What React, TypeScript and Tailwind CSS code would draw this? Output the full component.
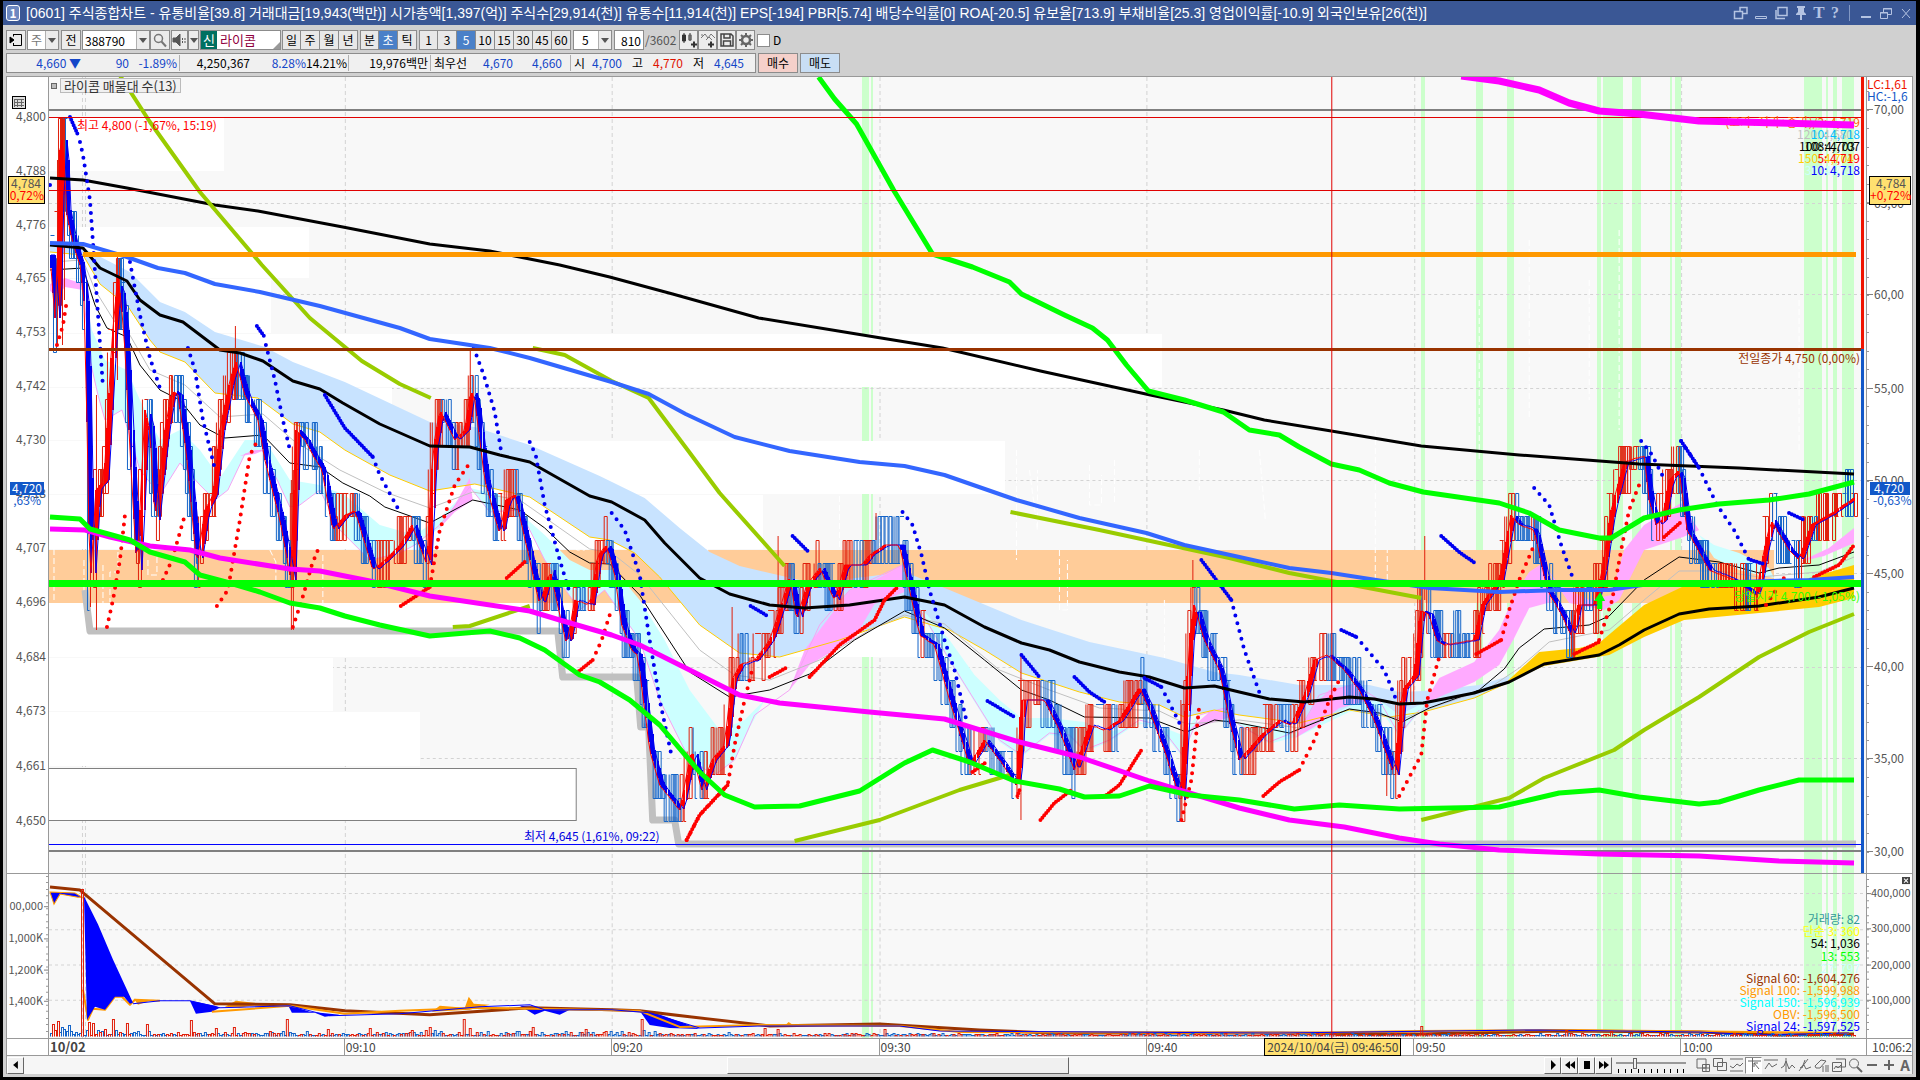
import React from "react";

type Pt = [number, number];

const parse = (s: string): Pt[] => s.trim().split(/\s+/).map((p) => p.split(",").map(Number) as Pt);

/* ---------- price path and generated bars ---------- */
const PRICE = parse(
  "50,255 56,330 60,150 63,135 66,210 72,240 80,265 85,310 90,590 96,490 104,480 112,340 118,275 124,330 130,450 137,570 145,410 150,430 155,520 165,430 172,390 178,395 186,450 197,565 205,510 213,495 220,430 230,380 236,362 245,395 258,420 265,460 280,520 291,580 296,430 305,440 313,455 322,470 333,530 345,515 355,510 373,570 385,560 400,545 412,525 427,565 433,450 440,410 455,440 465,430 471,390 475,400 485,480 500,535 506,500 515,495 530,560 540,605 550,570 567,645 575,600 590,605 598,555 607,545 615,575 622,625 632,650 638,655 650,750 660,785 680,810 692,750 702,790 712,760 725,745 732,680 740,665 755,660 770,640 783,600 790,575 797,620 807,585 820,568 835,600 845,565 862,565 870,555 885,545 900,545 910,590 920,635 935,645 950,700 970,765 985,740 1000,760 1017,785 1022,700 1035,700 1045,700 1060,730 1075,770 1090,725 1105,730 1120,720 1140,687 1150,710 1165,750 1181,800 1190,640 1195,605 1205,640 1220,670 1230,720 1240,760 1262,735 1280,720 1292,725 1305,695 1315,660 1328,655 1345,670 1360,690 1375,720 1395,775 1403,690 1415,675 1421,610 1430,615 1437,640 1445,645 1475,640 1482,605 1492,590 1500,580 1512,515 1520,525 1535,530 1548,590 1560,610 1572,635 1578,605 1595,605 1603,570 1612,510 1625,462 1645,456 1650,500 1657,525 1663,520 1670,480 1680,470 1688,530 1710,570 1735,580 1757,595 1765,550 1772,520 1790,550 1800,560 1812,525 1830,515 1840,508 1855,498"
);

const at = (x: number): number => {
  if (x <= PRICE[0][0]) return PRICE[0][1];
  for (let i = 1; i < PRICE.length; i++) {
    if (x <= PRICE[i][0]) {
      const [x0, y0] = PRICE[i - 1];
      const [x1, y1] = PRICE[i];
      return y0 + ((y1 - y0) * (x - x0)) / (x1 - x0);
    }
  }
  return PRICE[PRICE.length - 1][1];
};

const noise = (n: number): number => {
  const v = Math.sin(n * 127.1 + 11.7) * 43758.5453;
  return v - Math.floor(v);
};

const TICK = 23.45;
const buildBars = () => {
  let up = "";
  let down = "";
  let rise = "";
  let fall = "";
  let fast = "";
  let slow = "";
  for (let i = 0; i < 810; i++) {
    const x = Math.round(51 + i * 2.23);
    const a = at(x - 1);
    const b = at(x + 3);
    const slope = b - a;
    const g = Math.floor(i / 4);
    const top = 117.5 + Math.floor((Math.min(a, b) - 117.5 - noise(g) * 12) / TICK) * TICK;
    let bottom = 117.5 + Math.ceil((Math.max(a, b) - 117.5 + noise(g + 500) * 9) / TICK) * TICK;
    if (bottom - top < TICK) bottom = top + TICK;
    const y0 = Math.round(Math.max(117, top));
    const y1 = Math.round(Math.min(844, bottom));
    const isUp = noise(g + 900) + (slope < -3 ? 0.5 : slope > 3 ? -0.5 : 0) > 0.5;
    const r = noise(i + 77);
    let d = "";
    if (r < 0.55) d = `M${x}.5 ${y0}.5h3V${y1}.5h-3z`;
    else if (r < 0.8) d = `M${x}.5 ${y0}.5V${y1}.5h2`;
    else if (r < 0.9) d = `M${x - 1}.5 ${y0}.5h4`;
    if (isUp) up += d;
    else down += d;
    const p = at(x);
    const q = at(x - 5);
    const seg = `M${x} ${p.toFixed(0)}V${q.toFixed(0)}`;
    if (Math.abs(p - q) > 2) {
      if (p < q) rise += seg;
      else fall += seg;
    }
    fast += `${x},${p.toFixed(0)} `;
    slow += `${x},${q.toFixed(0)} `;
  }
  return { up, down, rise, fall, fast, slow };
};
const BARS = buildBars();

const buildVolume = () => {
  const spikes: Record<number, number> = { 1: 12, 3: 15, 14: 146, 17: 14, 19: 13, 28: 17, 34: 13, 63: 16, 74: 8, 82: 9, 106: 17, 143: 8, 170: 9, 185: 17, 188: 8, 216: 9, 240: 7, 265: 17, 320: 8, 326: 7, 374: 7, 615: 10, 680: 6, 700: 5 };
  let up = "";
  let down = "";
  for (let i = 0; i < 810; i++) {
    const x = Math.round(50 + i * 2.23);
    const base = i < 45 ? 9 : i < 280 ? 4 : 2;
    const h = Math.round(spikes[i] ?? 1 + noise(i * 3) * noise(i + 5) * base * 1.4);
    const d = `M${x}.5 1036.5v-${h}h2v${h}`;
    if (spikes[i] || noise(i + 31) > 0.55) up += d;
    else down += d;
  }
  return { up, down };
};
const VOLUME = buildVolume();

/* ---------- indicator lines ---------- */
const UPPER_BLACK = "50,178 83,180 127,188 158,194 215,205 258,211 343,227 430,244 490,251 560,265 610,277 673,294 759,318 857,334 943,348 1041,371 1151,395 1224,410 1265,420 1332,431 1422,446 1520,455 1640,464 1740,468 1855,474";
const BLUE = "50,243 83,244 127,257 158,268 185,273 215,284 260,292 320,306 400,328 430,339 490,348 530,358 612,382 649,394 686,414 735,437 790,451 860,462 905,466 945,475 1017,500 1080,518 1147,533 1185,545 1240,557 1290,568 1332,573 1390,582 1430,588 1500,592 1560,590 1610,590 1650,584 1700,583 1810,580 1855,577";
const MID_BLACK = "50,245 83,248 100,268 127,281 140,300 160,315 183,322 220,350 240,353 263,361 293,381 320,389 343,403 380,424 430,446 470,447 500,455 530,462 590,496 612,502 645,520 665,543 700,578 730,594 770,605 805,608 850,605 905,597 945,605 985,627 1022,643 1050,650 1080,662 1120,672 1150,677 1185,688 1215,686 1240,692 1270,699 1305,702 1350,697 1375,699 1400,704 1424,703 1475,693 1510,682 1545,664 1600,655 1620,645 1645,630 1680,614 1710,609 1760,606 1820,597 1855,588";
const BAND_TOP = "50,245 83,248 130,272 160,302 185,312 215,332 265,347 293,362 345,382 430,422 475,427 530,445 600,476 645,498 680,528 710,552 740,566 800,580 840,580 905,572 950,590 1022,620 1090,642 1165,658 1215,672 1240,675 1300,685 1370,685 1400,692 1424,691 1480,685 1510,676";
const BAND_LOW = "50,252 83,255 100,284 120,300 127,305 150,340 160,352 185,362 215,393 258,398 293,424 320,432 345,450 390,475 430,491 475,484 530,497 590,537 610,540 635,553 660,577 700,625 740,653 780,657 840,640 905,617 950,630 985,650 1022,673 1080,692 1120,702 1160,705 1185,717 1215,710 1240,715 1300,723 1350,710 1390,717 1424,712 1475,698 1510,682";
const GOLD_AREA = "1505,684 1540,652 1580,648 1600,643 1645,605 1685,586 1740,584 1800,581 1855,565 1855,598 1820,607 1760,613 1685,620 1645,637 1610,655 1545,666";
const THIN_BLACK = "50,270 83,268 95,305 107,328 127,337 140,365 160,390 180,400 200,425 225,438 263,435 290,463 320,467 343,483 370,496 385,507 430,523 473,500 520,510 545,528 570,552 590,563 610,564 640,595 690,672 730,697 770,690 810,674 855,640 905,611 945,628 985,660 1022,690 1050,700 1085,717 1150,718 1187,732 1215,720 1240,723 1290,733 1350,709 1380,713 1403,722 1430,708 1480,690 1505,669 1520,648 1545,629 1590,625 1610,616 1645,580 1680,557 1720,562 1760,573 1780,568 1820,565 1855,552";
const THIN_GRAY = "50,262 83,260 95,290 115,322 127,330 150,370 185,385 220,417 263,414 293,440 340,470 385,492 430,508 473,492 520,500 560,528 590,549 612,553 640,575 700,650 735,675 770,680 820,660 870,630 905,615 945,624 1000,670 1050,690 1100,708 1160,711 1187,724 1240,720 1300,728 1350,709 1403,719 1440,705 1490,688 1520,668 1550,642 1610,630 1645,600 1680,571 1720,571 1760,577 1820,572 1855,557";
const CYAN_A = "83,290 92,330 105,360 127,370 140,400 160,440 180,430 200,450 220,478 245,440 265,440 290,480 320,485 345,495 380,525 415,535 440,518 470,488 500,495 545,535 570,560 590,570 615,570 640,600 665,640 690,690 720,730 745,720 765,700 750,728 735,760 715,775 690,760 660,700 640,640 605,590 580,610 545,560 520,510 490,512 470,487 440,528 415,545 400,553 370,560 340,530 320,490 300,505 290,507 275,475 262,450 245,454 228,490 215,500 200,485 180,463 160,495 140,470 122,410 105,420 98,395 90,360";
const CYAN_B = "903,590 925,612 950,640 975,675 1000,700 1022,718 1050,718 1085,722 1110,732 1150,722 1183,735 1200,712 1183,757 1160,728 1140,722 1110,742 1085,752 1070,737 1050,735 1022,757 1000,742 975,702 950,662 915,602";
const CYAN_C = "1235,722 1300,732 1350,706 1380,700 1400,715 1430,700 1420,712 1400,737 1380,708 1350,712 1300,736 1270,744";
const CYAN_D = "1700,535 1715,545 1740,553 1770,568 1775,578 1760,575 1740,570 1715,558";
const PINKS = [
  "50,284 65,278 83,284 83,290 65,287 58,296 50,291",
  "755,717 790,690 805,650 820,630 850,590 875,580 903,565 905,592 875,604 855,638 810,665 790,690",
  "438,530 455,505 470,478 473,500 455,512",
  "1296,738 1315,705 1330,690 1355,684 1370,700 1340,708 1315,727",
  "1424,705 1440,678 1475,662 1500,630 1515,595 1530,572 1545,562 1552,602 1530,608 1515,638 1500,665 1475,682 1440,697",
  "1545,565 1560,585 1590,600 1612,595 1625,550 1645,525 1682,503 1700,530 1684,537 1645,550 1620,600 1605,610 1570,603",
  "1800,562 1830,548 1855,528 1855,543 1825,556",
  "1190,730 1210,712 1225,709 1235,716 1215,722",
  "240,456 255,450 265,450 255,454",
];
const PINK_LINE = "83,288 90,360 98,395 105,420 122,410 140,470 160,495 180,463 200,485 215,500 228,490 245,454 262,450 275,475 290,507 300,505 320,490 340,530 370,560 400,553 415,545 440,525 470,487 490,512 520,510 545,560 580,610 605,590 640,640 660,700 690,760 715,775 735,760 755,715 790,690 820,625 850,590 903,565 915,600 950,660 975,700 1000,740 1022,755 1050,733 1070,735 1085,750 1110,740 1140,720 1160,725 1183,755 1200,715 1225,708 1240,725 1270,742 1300,730 1320,695 1355,684 1380,700 1400,735 1420,710";
const DONCHIAN = "85,590 90,631 558,631 563,677 637,677 641,727 649,727 653,820 675,820 679,844 1857,844";
const GREEN_LOW = "50,517 80,519 90,529 112,535 130,540 150,552 185,562 200,575 230,583 260,592 290,603 320,608 345,616 380,625 430,636 490,631 520,638 545,650 580,675 600,682 630,700 660,725 700,772 725,795 755,807 800,806 860,791 905,763 933,750 970,762 1015,781 1060,789 1085,797 1120,796 1150,786 1190,795 1240,800 1295,809 1340,805 1400,809 1500,807 1530,800 1560,793 1600,790 1640,797 1700,804 1720,802 1760,790 1800,780 1855,780";
const GREEN_UP = "819,77 835,99 857,124 894,190 933,254 973,267 1010,282 1022,294 1065,315 1093,328 1108,340 1127,365 1149,391 1185,400 1224,412 1250,430 1280,435 1300,447 1332,464 1360,470 1390,483 1424,492 1500,503 1530,513 1560,530 1600,538 1612,538 1645,518 1680,510 1720,504 1770,500 1810,494 1855,482";
const MAGENTA = "50,529 85,530 110,537 150,546 190,550 220,558 290,569 320,571 370,581 430,596 530,611 560,620 612,635 640,645 690,670 740,695 780,703 870,712 945,719 1020,742 1080,757 1150,781 1190,793 1240,808 1290,820 1345,827 1400,838 1440,844 1500,850 1600,854 1700,856 1780,861 1855,863";
const MAGENTA_UP = "1462,76 1500,81 1540,90 1570,103 1600,111 1640,114 1700,121 1780,123 1855,125";
const OLIVES = [
  "119,74 150,122 200,192 262,265 310,318 362,361 400,384 431,398",
  "533,348 565,355 612,381 649,398 688,450 720,493 785,566",
  "453,627 470,626 530,606",
  "795,841 880,820 960,790 1010,775",
  "1011,512 1100,530 1230,558 1290,573 1332,581 1422,598",
  "1422,820 1510,798 1545,778 1615,750 1645,730 1700,697 1760,657 1810,632 1855,614",
];
const SAR_BLUE = ["50,185 55,191", "80,142 83,155 90,200 97,300 103,387", "130,262 140,315 150,358 160,388", "188,348 195,370 203,420 214,465", "266,345 275,380 283,420 290,450", "373,457 380,475 400,512", "474,348 484,375 495,412 502,455", "530,442 536,455 545,505 560,560 570,593", "612,513 625,530 640,575 650,640 660,700 672,756", "903,512 913,525 922,555 930,590 945,640 955,670 968,725", "1162,687 1182,727", "1232,600 1245,650 1262,698", "1357,637 1385,670 1397,700", "1535,488 1550,505 1562,545 1575,582", "1642,441 1653,455 1663,475", "1682,441 1700,468 1718,505 1735,530 1750,560"];
const SAR_BLUE_DENSE = ["70,117 78,135", "257,326 264,336", "325,395 345,428 373,457", "793,536 808,551", "751,606 768,616", "988,701 1015,717", "1022,655 1040,677", "1075,677 1090,692 1105,702", "1145,678 1162,687", "1202,560 1232,600", "1342,630 1357,637", "1442,536 1460,552 1477,564", "1752,560 1765,564", "1790,513 1805,520", "1682,441 1700,468"];
const SAR_RED = ["57,345 63,325 67,300", "107,627 113,600 120,560 125,515", "163,580 172,560 185,515", "217,606 228,590 240,520 250,455 258,440", "293,627 302,600 312,565 320,545", "430,587 440,530 455,485 472,460", "593,660 602,640 610,615", "687,840 700,815 728,785 735,745 745,700 752,672", "1182,820 1192,780 1200,705", "1300,770 1315,740 1330,700 1340,680", "1400,796 1422,755 1428,700 1440,657", "1502,640 1510,610 1520,580 1535,545", "1600,640 1613,600 1622,550 1630,510 1640,485", "1767,605 1785,578"];
const SAR_RED_DENSE = ["401,606 430,587", "507,578 527,560", "577,673 593,660", "687,840 700,815 728,785", "770,677 788,667", "810,677 840,645 875,620 885,600 898,587", "973,772 987,762", "1041,820 1055,803 1072,790", "1107,795 1120,785 1142,750", "1264,796 1280,782 1300,770", "1477,654 1502,640", "1575,654 1600,642", "1665,537 1682,522", "1815,577 1840,565 1855,545", "1018,796 1020,790"];
const STRIPES: Pt[] = [[862, 7], [871, 2], [1422, 4], [1477, 7], [1508, 7], [1598, 4], [1604, 20], [1633, 9], [1671, 2], [1676, 6], [1805, 18], [1827, 2], [1834, 4], [1843, 12]];
const V_GRID = [82, 85, 345, 612, 880, 1147, 1415, 1682];
const PRICE_ROWS = [203, 294, 388, 480, 573, 667, 758, 851];
const VOL_ROWS = [894, 930, 965, 1000];
const PROFILE: [number, number, number][] = [[117, 55, 224], [227, 52, 309], [279, 55, 271], [334, 54, 1163], [388, 53, 392], [441, 54, 1006], [495, 55, 763], [603, 55, 925], [658, 54, 333], [712, 55, 420]];

const Line = ({ d, c, w }: { d: string; c: string; w: number }) => (
  <polyline points={d} fill="none" stroke={c} strokeWidth={w} strokeLinejoin="round" />
);
const Dots = ({ d, c, dense }: { d: string; c: string; dense?: boolean }) => (
  <polyline points={d} fill="none" stroke={c} strokeWidth={4} strokeLinecap="round" strokeDasharray={dense ? "0 3" : "0 8"} />
);
const T = ({ x, y, c, children, end }: { x: number; y: number; c: string; children: React.ReactNode; end?: boolean }) => (
  <text x={x} y={y} fill={c} fontSize={12} textAnchor={end ? "end" : "start"}>{children}</text>
);

function PricePlot() {
  return (
    <svg viewBox="49 77 1818 796" preserveAspectRatio="none" className="block h-full w-full bg-[#f8f8f8]" role="img" aria-label="라이콤 가격 차트">
      <g shapeRendering="crispEdges">
        {STRIPES.map(([x, w]) => <rect key={x} x={x} y={77} width={w} height={796} fill="#ccffcc" />)}
        {PRICE_ROWS.map((y) => <path key={y} d={`M49 ${y}.5H1862`} stroke="#d3d3d3" strokeDasharray="3 3" />)}
        {V_GRID.map((x) => <path key={x} d={`M${x}.5 77V873`} stroke="#d3d3d3" strokeDasharray="4 3" />)}
        {PROFILE.map(([y, h, x]) => <rect key={y} x={49} y={y} width={x - 49} height={h - 1} fill="#ffffff" />)}
        <rect x={49} y={550} width={1726} height={53} fill="#ffcc99" />
        <rect x={47} y={768.5} width={529.5} height={52} fill="#ffffff" stroke="#808080" />
        <path d="M49 110H1862M49 851H1862" stroke="#808080" strokeWidth={2} />
      </g>
      <g fill="none" stroke="#ffffff" strokeDasharray="6 3" shapeRendering="crispEdges">
        <path d="M54 549V600M84 560V600M103 565v60M118 552v20h-8v30M148 560v15h9v-20M270 550l6 12v20h10M323 555v50M577 520v30h8v-15M592 475v40M690 560v40h9v25h5v-60M708 548v60M840 496v54M1017 450v110M1030 470l8 60v-60M1060 550v60h8v-50M1090 465v40h12v-30M1115 460v45M1165 600v60M1200 450v40M1260 450l6 70M1376 430v150h12v-30M1590 280v120M1620 230v200M1800 300v150M1480 300v160M1530 240v180" />
      </g>
      <polygon points={BAND_TOP + " " + BAND_LOW.split(" ").reverse().join(" ")} fill="#c8e3ff" />
      <polygon points={GOLD_AREA} fill="#ffcc00" />
      {[CYAN_A, CYAN_B, CYAN_C, CYAN_D].map((p) => <polygon key={p} points={p} fill="#ccffff" />)}
      {PINKS.map((p) => <polygon key={p} points={p} fill="#ffaaff" />)}
      <Line d={DONCHIAN} c="#c0c0c0" w={7} />
      <g shapeRendering="crispEdges">
        <Line d={PINK_LINE} c="#f4a6f4" w={1} />
        <Line d={BAND_LOW} c="#ffcc00" w={1} />
        <Line d={THIN_GRAY} c="#c0c0c0" w={1} />
        <Line d={THIN_BLACK} c="#000000" w={1} />
        <path d={BARS.up} stroke="#e01e0a" fill="none" />
        <path d={BARS.down} stroke="#1464c8" fill="none" />
        <path d="M62.500 117V345M64.500 117V300M57.500 160V345M96.500 395V630M90.500 560V607M117.500 257V380M235.500 326V400M291.500 480V630M293.500 470V630M470.500 350V420M778.500 536V620M732.500 607V700M876.500 513V540M1021.500 653V820M1181.500 700V820M1193.500 560V650M1425.500 536V600M1572.500 610V654M1387.500 740V796" stroke="#e01e0a" />
        <path d={BARS.fall} stroke="#0000f0" strokeWidth={2} />
        <path d={BARS.rise} stroke="#ff0000" strokeWidth={2} />
        <Line d={BARS.slow} c="#0000f0" w={1} />
        <Line d={BARS.fast} c="#ff0000" w={1} />
      </g>
      <Line d={UPPER_BLACK} c="#000000" w={3} />
      <Line d={MID_BLACK} c="#000000" w={3} />
      {OLIVES.map((o) => <Line key={o} d={o} c="#99cc00" w={4} />)}
      {SAR_BLUE.map((s) => <Dots key={s} d={s} c="#0000f0" />)}
      {SAR_BLUE_DENSE.map((s) => <Dots key={s} d={s} c="#0000f0" dense />)}
      {SAR_RED.map((s) => <Dots key={s} d={s} c="#ff0000" />)}
      {SAR_RED_DENSE.map((s) => <Dots key={s} d={s} c="#ff0000" dense />)}
      <Line d={BLUE} c="#3366ff" w={4} />
      <Line d={MAGENTA} c="#ff00ff" w={5} />
      <Line d={GREEN_LOW} c="#00ff00" w={5} />
      <Line d={GREEN_UP} c="#00ff00" w={5} />
      <g shapeRendering="crispEdges">
        <rect x={83} y={252} width={1774} height={5} fill="#ff9900" />
        <rect x={49} y={348} width={1813} height={3} fill="#993300" />
        <rect x={49} y={580} width={1813} height={7} fill="#00ff00" />
        <path d="M49 117.500H1862M49 190.500H1862M1332.500 77V873" stroke="#e00000" />
        <path d="M49 844.500H1862" stroke="#0000ff" />
      </g>
      <T x={77} y={130} c="#ff0000">최고 4,800 (-1,67%, 15:19)</T>
      <T x={660} y={841} c="#0000e0" end>최저 4,645 (1,61%, 09:22)</T>
      <T x={1861} y={363} c="#993300" end>전일종가 4,750 (0,00%)</T>
      <path d="M1601 592l5 9h-3v8h-5v-8h-3z" fill="#00ff00" />
      <T x={1861} y={601} c="#33ff00" end>당일시가 4,700 (-1,05%)</T>
      <T x={1861} y={127} c="#ff6600" end>(고가+저가+종가)/3: 4,719</T>
      <Line d={MAGENTA_UP} c="#ff00ff" w={7} />
      <T x={1854} y={139} c="#c0c0c0" end>120: 4,680</T>
      <T x={1861} y={139} c="#00bfff" end>10: 4,718</T>
      <T x={1856} y={151} c="#000000" end>100: 4,703</T>
      <T x={1861} y={151} c="#000000" end>108: 4,707</T>
      <T x={1855} y={163} c="#ffcc00" end>150: 4,704</T>
      <T x={1861} y={163} c="#ff0000" end>5: 4,719</T>
      <T x={1855} y={175} c="#ccffff" end>30: 4,714</T>
      <T x={1861} y={175} c="#0000ff" end>10: 4,718</T>
      <rect x={1862} y={77} width={3} height={272} fill="#f01400" />
      <rect x={1862} y={349} width={3} height={524} fill="#1258c8" />
    </svg>
  );
}

function VolumePlot() {
  return (
    <svg viewBox="49 875 1818 163" preserveAspectRatio="none" className="block h-full w-full bg-[#f8f8f8]" role="img" aria-label="거래량 및 OBV">
      <g shapeRendering="crispEdges">
        {STRIPES.map(([x, w]) => <rect key={x} x={x} y={875} width={w} height={163} fill="#ccffcc" />)}
        {VOL_ROWS.map((y) => <path key={y} d={`M49 ${y}.5H1867`} stroke="#d3d3d3" strokeDasharray="3 3" />)}
        {V_GRID.map((x) => <path key={x} d={`M${x}.5 875V1038`} stroke="#d3d3d3" strokeDasharray="4 3" />)}
      </g>
      <polygon points="50,893 75,894 82,898 78,898 60,895 54,905" fill="#0000ff" stroke="#ff9900" strokeWidth={1} />
      <Line d="83,990 88,1020 93,1009 105,1010 115,997 122,997 130,1005 135,1000 160,1001" c="#ff9900" w={2} />
      <polygon points="84,897 98,925 113,960 133,1003 130,1004 124,997 115,997 105,1010 95,1007 87,1020" fill="#0000ff" />
      <polygon points="190,1001 215,1006 220,1008 212,1012 196,1014" fill="#0000ff" />
      <polygon points="288,1005 310,1012 340,1015 325,1017 315,1013 292,1013" fill="#0000ff" />
      <polygon points="520,1006 550,1008 570,1010 560,1015 545,1011 535,1015" fill="#0000ff" />
      <polygon points="640,1011 655,1013 700,1029 670,1028 650,1025" fill="#0000ff" />
      <polygon points="134,999 150,1001 138,1005" fill="#ff9900" />
      <polygon points="225,1007 236,1001 262,1004 240,1008" fill="#ff9900" />
      <polygon points="432,1012 440,1006 465,1008 469,997 474,1004 490,1005 470,1010" fill="#ff9900" />
      <polygon points="785,1026 789,1022 795,1026" fill="#ff9900" />
      <Line d="50,888 80,891 215,1004 290,1005 345,1011 430,1015 530,1008 612,1010 640,1011 690,1017 770,1026 880,1024 980,1030 1050,1033 1280,1033 1420,1034 1560,1031 1700,1032 1780,1035 1855,1034" c="#993300" w={3} />
      <Line d="212,1012 290,1006 345,1014 400,1011 480,1008 535,1009 640,1011 680,1027 760,1025 900,1026 960,1032 1290,1033 1422,1031 1560,1030 1850,1033" c="#ff9900" w={2} />
      <Line d="133,1004 160,1001 190,1001 220,1008 290,1006 330,1016 400,1014 480,1007 530,1005 545,1010 612,1010 650,1013 700,1028 760,1026 900,1026 940,1031 1100,1032 1280,1033 1540,1030 1700,1032 1760,1035 1850,1033" c="#0000ff" w={1} />
      <g shapeRendering="crispEdges" fill="none">
        <path d={VOLUME.down} stroke="#1464c8" />
        <path d={VOLUME.up} stroke="#e01e0a" />
        <path d="M1332.500 875V1038" stroke="#e00000" />
      </g>
      <T x={1861} y={925} c="#339999" end>거래량: 82</T>
      <T x={1861} y={937} c="#ffff00" end>단순 3: 360</T>
      <T x={1861} y={949} c="#000000" end>54: 1,036</T>
      <T x={1861} y={961} c="#00ff00" end>13: 553</T>
      <T x={1861} y={973} c="#ccffff" end>27: 797</T>
      <T x={1861} y={983} c="#993300" end>Signal 60: -1,604,276</T>
      <T x={1861} y={995} c="#ff9900" end>Signal 100: -1,599,988</T>
      <T x={1861} y={1007} c="#00ffff" end>Signal 150: -1,596,939</T>
      <T x={1861} y={1019} c="#ff9900" end>OBV: -1,596,500</T>
      <T x={1861} y={1031} c="#0000ff" end>Signal 24: -1,597,525</T>
    </svg>
  );
}

const LEFT_LABELS: [number, string][] = [[117, "4,800"], [171, "4,788"], [225, "4,776"], [278, "4,765"], [332, "4,753"], [386, "4,742"], [440, "4,730"], [494, "4,718"], [548, "4,707"], [602, "4,696"], [657, "4,684"], [711, "4,673"], [766, "4,661"], [821, "4,650"]];
const RIGHT_LABELS: [number, string][] = [[109, "70,00"], [203, "65,00"], [294, "60,00"], [388, "55,00"], [480, "50,00"], [573, "45,00"], [666, "40,00"], [758, "35,00"], [851, "30,00"]];

const axisCls = "block h-full w-full bg-white";

function LeftPriceAxis() {
  return (
    <svg viewBox="7 77 41 796" preserveAspectRatio="none" className={axisCls} role="img" aria-label="가격 축">
      {LEFT_LABELS.map(([y, t]) => <T key={t} x={46} y={y + 4} c="#555555" end>{t}</T>)}
      <rect x={12.5} y={96.5} width={13} height={12} fill="#ddd" stroke="#000" />
      <path d="M14 99.500h10M14 102.500h10M14 105.500h10M17.500 99v8M21.500 99v8M14.500 99v8" stroke="#666" />
      <rect x={8.5} y={176.5} width={36} height={27} fill="#ffe070" stroke="#000" />
      <T x={41} y={188} c="#555555" end>4,784</T>
      <T x={44} y={200} c="#ff0000" end>0,72%</T>
      <rect x={10} y={482} width={34} height={13} fill="#1258c8" />
      <T x={42} y={493} c="#ffffff" end>4,720</T>
      <T x={41} y={505} c="#1258c8" end>,63%</T>
    </svg>
  );
}

function RightPriceAxis() {
  const ticks = Array.from({ length: 42 }, (_, i) => 91 + i * 18.55).filter((y) => y < 870);
  return (
    <svg viewBox="1868 77 45 796" preserveAspectRatio="none" className={axisCls} role="img" aria-label="지표 축">
      {ticks.map((y) => <path key={y} d={`M1868 ${Math.round(y)}.5h2`} stroke="#999" />)}
      {RIGHT_LABELS.map(([y, t]) => (
        <g key={t}>
          <path d={`M1868 ${y}.5h6`} stroke="#808080" />
          <T x={1875} y={y + 5} c="#555555">{t}</T>
        </g>
      ))}
      <T x={1868} y={89} c="#f01400">LC:1,61</T>
      <T x={1868} y={101} c="#1258c8">HC:-1,6</T>
      <rect x={1870.5} y={176.5} width={41} height={28} fill="#ffe070" stroke="#000" />
      <T x={1877} y={188} c="#555555">4,784</T>
      <T x={1871} y={200} c="#ff0000">+0,72%</T>
      <rect x={1871} y={482} width={40} height={13} fill="#1258c8" />
      <T x={1875} y={493} c="#ffffff">4,720</T>
      <T x={1874} y={505} c="#1258c8">-0,63%</T>
    </svg>
  );
}

function LeftVolumeAxis() {
  return (
    <svg viewBox="7 875 41 163" preserveAspectRatio="none" className={axisCls} role="img" aria-label="OBV 축">
      {Array.from({ length: 25 }, (_, i) => <path key={i} d={`M46 ${Math.round(877 + i * 6.4)}.5h2`} stroke="#999" />)}
      {([[907, "00,000"], [939, "1,000K"], [970, "1,200K"], [1001, "1,400K"]] as [number, string][]).map(([y, t]) => (
        <g key={t}>
          <path d={`M44 ${y}.5h4`} stroke="#808080" />
          <text x={43} y={y + 4} fill="#555555" fontSize={11} textAnchor="end">{t}</text>
        </g>
      ))}
    </svg>
  );
}

function RightVolumeAxis() {
  return (
    <svg viewBox="1868 875 45 163" preserveAspectRatio="none" className={axisCls} role="img" aria-label="거래량 축">
      {Array.from({ length: 22 }, (_, i) => <path key={i} d={`M1868 ${Math.round(880 + i * 7.1)}.5h2`} stroke="#999" />)}
      {([[894, "400,000"], [929, "300,000"], [965, "200,000"], [1000, "100,000"]] as [number, string][]).map(([y, t]) => (
        <g key={t}>
          <path d={`M1868 ${y}.5h4`} stroke="#808080" />
          <text x={1872} y={y + 4} fill="#555555" fontSize={11}>{t}</text>
        </g>
      ))}
      <rect x={1903} y={878} width={8} height={7} fill="#444" />
      <path d="M1905 879.500l4 4M1909 879.500l-4 4" stroke="#fff" />
    </svg>
  );
}

/* ---------- chrome ---------- */
const Ico = ({ children, label, cls }: { children: React.ReactNode; label: string; cls?: string }) => (
  <svg viewBox="0 0 16 16" className={"h-4 w-4 shrink-0 " + (cls ?? "")} fill="none" stroke="currentColor" role="img" aria-label={label}>{children}</svg>
);
const btn = "flex h-5 items-center justify-center border border-[#8c8c8c] bg-[#ececec] text-black";
const Arrow = () => <svg viewBox="0 0 8 5" className="h-[5px] w-2"><path d="M0 0h8L4 5z" fill="#555" /></svg>;

const Segments = ({ items, active, label }: { items: string[]; active?: string; label: string }) => (
  <div className="flex" role="group" aria-label={label}>
    {items.map((t, i) => (
      <button key={t} type="button" className={"flex h-5 w-[19px] items-center justify-center border-y border-r border-[#8c8c8c] " + (i === 0 ? "border-l " : "") + (t === active ? "bg-[#4a80c8] text-white" : "bg-[#e8e8e8]")}>{t}</button>
    ))}
  </div>
);

function TitleBar() {
  return (
    <header className="flex h-6 shrink-0 items-center bg-[#3a5795] pl-[3px] pr-[2px] text-white">
      <span className="mr-[6px] flex h-4 w-[14px] items-center justify-center rounded-[3px] border border-white bg-[#6d88c0] text-[12px] font-bold">1</span>
      <h1 className="min-w-0 flex-1 whitespace-nowrap text-[14px] leading-4 [font-family:'Liberation_Sans','Noto_Sans_CJK_KR',sans-serif]">
        [0601] 주식종합차트 - 유통비율[39.8] 거래대금[19,943(백만)] 시가총액[1,397(억)] 주식수[29,914(천)] 유통수[11,914(천)] EPS[-194] PBR[5.74] 배당수익률[0] ROA[-20.5] 유보율[713.9] 부채비율[25.3] 영업이익률[-10.9] 외국인보유[26(천)]
      </h1>
      <div className="flex items-center gap-1 text-[#b4c3e2]">
        <button type="button" aria-label="창 분리"><Ico label="분리"><path d="M1.500 6.500h8v7h-8zM7 6V2.500h7v6h-4" strokeWidth="1.500" /></Ico></button>
        <button type="button" aria-label="내리기"><Ico label="내리기"><path d="M2.500 11.500h11v2h-11z" /></Ico></button>
        <button type="button" aria-label="창 복사"><Ico label="복사"><path d="M5 2.500h9v8H5zM3 5v8.500h9" strokeWidth="1.500" /></Ico></button>
        <button type="button" aria-label="고정"><Ico label="고정"><path d="M4 1h8v2h-1v4l2 2v1H9v5H7v-5H3V9l2-2V3H4z" fill="currentColor" stroke="none" /></Ico></button>
        <button type="button" className="w-3 text-[17px] font-bold leading-4 [font-family:'Liberation_Serif',serif]">T</button>
        <button type="button" className="w-3 text-[16px] font-bold leading-4 [font-family:'Liberation_Serif',serif]">?</button>
        <span className="mx-1 h-4 w-px bg-[#8298c4]" />
        <button type="button" aria-label="최소화"><Ico label="최소화"><path d="M3 12h10" strokeWidth="2" /></Ico></button>
        <button type="button" aria-label="이전 크기"><Ico label="이전 크기"><path d="M2.500 7.500h7v6h-7zM5.500 7V3.500h8v6H10M5 4h9M2 8h8" /></Ico></button>
        <button type="button" aria-label="닫기"><Ico label="닫기"><path d="M4 4l8 9M12 4l-8 9" /></Ico></button>
      </div>
    </header>
  );
}

function Toolbar() {
  return (
    <div className="flex h-5 items-center text-[12px]">
      <button type="button" className={btn + " w-5"} aria-label="패널 열기"><Ico label="패널"><path d="M5 2.500h8.500v11H5M5.500 2.500v2M5.500 11v3" /><path d="M2 5l4 3-4 3z" fill="currentColor" /></Ico></button>
      <label className="relative ml-px flex h-5 w-8 items-center border border-[#8c8c8c] bg-white">
        <select aria-label="종목 구분" className="h-full w-full appearance-none bg-transparent pl-[3px] text-[#777]"><option>주</option></select>
        <span className="pointer-events-none absolute right-0 flex h-full w-[13px] items-center justify-center border-l border-[#b0b0b0] bg-[#ececec]"><Arrow /></span>
      </label>
      <button type="button" className={btn + " ml-[2px] w-5"}>전</button>
      <label className="relative ml-px flex h-5 w-[68px] items-center border border-[#8c8c8c] bg-white">
        <input aria-label="종목 코드" defaultValue="388790" className="h-full w-full bg-transparent pl-[2px] outline-none" />
        <span className="pointer-events-none absolute right-0 flex h-full w-[13px] items-center justify-center border-l border-[#b0b0b0] bg-[#ececec]"><Arrow /></span>
      </label>
      <button type="button" className={btn + " w-5"} aria-label="종목 검색"><Ico label="검색" cls="text-[#777]"><circle cx="6.500" cy="6.500" r="4" strokeWidth="1.500" /><path d="M9.500 9.500l4.500 5" strokeWidth="2" /></Ico></button>
      <button type="button" className={btn + " ml-px w-[17px]"} aria-label="소리"><Ico label="소리" cls="text-[#555]"><path d="M1 6h3l4-4v12l-4-4H1z" fill="currentColor" /><path d="M10.500 6v5M13 6v5" strokeDasharray="2 1" /></Ico></button>
      <button type="button" className={btn + " w-[11px]"} aria-label="소리 옵션"><Arrow /></button>
      <div className="ml-px flex h-5 w-[81px] items-center border border-[#8c8c8c] bg-white text-[13px]">
        <span className="flex h-[18px] w-4 items-center justify-center bg-[#007060] text-white">신</span>
        <span className="ml-[3px] text-[#900040]">라이콤</span>
        <svg viewBox="0 0 7 7" className="ml-auto h-[7px] w-[7px] self-end"><path d="M7 0v7H0z" fill="#999" /></svg>
      </div>
      <div className="ml-px flex gap-[2px]">
        <Segments label="주기" items={["일", "주", "월", "년"]} />
        <Segments label="분틱" items={["분", "초", "틱"]} active="초" />
        <Segments label="간격" items={["1", "3", "5", "10", "15", "30", "45", "60"]} active="5" />
      </div>
      <label className="relative ml-[2px] flex h-5 w-[39px] items-center border border-[#8c8c8c] bg-white">
        <select aria-label="간격 선택" className="h-full w-full appearance-none bg-transparent pl-2"><option>5</option></select>
        <span className="pointer-events-none absolute right-0 flex h-full w-[13px] items-center justify-center border-l border-[#b0b0b0] bg-[#ececec]"><Arrow /></span>
      </label>
      <input aria-label="표시 봉 수" defaultValue="810" className="ml-[2px] h-5 w-[30px] border border-[#8c8c8c] bg-white pr-[2px] text-right outline-none" />
      <span className="ml-px w-[34px] text-[#555]">/3602</span>
      <button type="button" className={btn + " w-[19px]"} aria-label="봉 추가"><Ico label="봉" cls="text-[#333]"><path d="M1.500 3h3v6h-3z" fill="currentColor" /><path d="M7.500 3h3v5h-3z" fill="#aaa" stroke="#888" /><path d="M3 1v10M9 1v8" /><path d="M10 12.500h6M13 9.500v6" strokeWidth="2" /></Ico></button>
      <button type="button" className={btn + " w-[19px]"} aria-label="지표 추가"><Ico label="지표" cls="text-[#333]"><path d="M1 6l4-4 3 4 3-4 4 4M1 3h2M6 8l3-3 3 3" stroke="#777" /><path d="M8 12.500h6M11 9.500v6" strokeWidth="2" /></Ico></button>
      <button type="button" className={btn + " w-[19px]"} aria-label="저장"><Ico label="저장" cls="text-[#444]"><path d="M2 2h10l2 2v10H2zM5 2v4h6V2M4.500 14V9h7v5" strokeWidth="1.500" /></Ico></button>
      <button type="button" className={btn + " w-[19px]"} aria-label="설정"><Ico label="설정" cls="text-[#666]"><circle cx="8" cy="8" r="4" strokeWidth="2.500" /><path d="M8 1v3M8 12v3M1 8h3M12 8h3M3 3l2 2M11 11l2 2M13 3l-2 2M5 11l-2 2" strokeWidth="2" /></Ico></button>
      <label className="ml-[2px] flex items-center gap-[3px]"><input type="checkbox" className="h-[13px] w-[13px] appearance-none border border-[#8c8c8c] bg-white" />D</label>
    </div>
  );
}

function QuoteRow() {
  const c = "text-right ";
  const b = "text-[#1446c8] ";
  return (
    <div className="mt-[3px] flex h-5 items-center gap-[2px] text-[12px]">
      <div className="flex h-5 w-[750px] items-center border border-[#8c8c8c] bg-[#f0f0f0]">
        <span className={c + b + "w-[74px]"}>4,660 ▼</span>
        <span className={c + b + "w-[48px]"}>90</span>
        <span className={c + b + "w-[51px] border-r border-[#b0b0b0] pr-[2px]"}>-1.89%</span>
        <span className={c + "w-[70px]"}>4,250,367</span>
        <span className={c + b + "w-[56px]"}>8.28%</span>
        <span className={c + "w-[43px] border-r border-[#b0b0b0] pr-px"}>14.21%</span>
        <span className={c + "w-[82px] border-r border-[#b0b0b0] pr-[2px]"}>19,976백만</span>
        <span className="ml-[3px] w-[38px]">최우선</span>
        <span className={c + b + "w-[41px]"}>4,670</span>
        <span className={c + b + "w-[58px] border-r border-[#b0b0b0] pr-2"}>4,660</span>
        <span className="ml-[3px] w-4">시</span>
        <span className={b + "ml-[2px] w-10"}>4,700</span>
        <span className="w-[21px]">고</span>
        <span className="w-10 text-[#e01400]">4,770</span>
        <span className="w-[21px]">저</span>
        <span className={b}>4,645</span>
      </div>
      <button type="button" className="h-5 w-10 border border-[#8c8c8c] bg-[#f5d0ca]">매수</button>
      <button type="button" className="h-5 w-10 border border-[#8c8c8c] bg-[#c8def4]">매도</button>
    </div>
  );
}

const TIMES: [string, string][] = [["10/02", "flex-[296]"], ["09:10", "flex-[267]"], ["09:20", "flex-[268]"], ["09:30", "flex-[267]"], ["09:40", "flex-[268]"], ["09:50", "flex-[267]"], ["10:00", "flex-[185]"]];

function TimeAxis() {
  return (
    <div className="relative flex h-[18px] shrink-0 border-y border-[#999] bg-white text-[12px] text-[#444]">
      <div className="w-[41px]" />
      <div className="flex min-w-0 flex-1">
        {TIMES.map(([t, w]) => (
          <div key={t} className={w + " border-l border-[#999] pl-px leading-4 " + (t === "10/02" ? "text-[13px] font-bold" : "")}>{t}</div>
        ))}
      </div>
      <div className="w-[46px] whitespace-nowrap border-l border-[#999] pl-[5px] leading-4">10:06:2</div>
      <div className="absolute left-[66%] top-[-1px] flex h-[18px] w-[137px] items-center justify-center whitespace-nowrap border border-black bg-[#ffe070]">2024/10/04(금) 09:46:50</div>
    </div>
  );
}

const raised = "flex h-[17px] w-[17px] items-center justify-center border border-b-[#666] border-l-white border-r-[#666] border-t-white bg-[#f0f0f0] text-black";
const TOOLS: [string, string][] = [
  ["새 창", "M2 2h9v9H2zM7.500 7.500h7v7h-7zM11 8v6M8 11h6"],
  ["겹치기", "M1.500 1.500h9v8h-9zM5.500 5.500h9v8h-9z"],
  ["영역", "M1 2h13M1 14h13M1 9l3 2 4-4 3 2 3-3"],
  ["십자선", "M2 4h13M6.500 1v14M8 6l5 6M8 6v4M8 6h4"],
  ["추세선", "M1 3h14M2 12l4-6 3 4 5-3"],
  ["수직선", "M6 1v14M1 11l3-2 2-5 3 8 3-4 3 3"],
  ["선 그리기", "M2 14L11 2M3 11l4-3 2 4 5-2M8 3l-3 8"],
  ["모두 지우기", "M1 9l6-6 5 1-6 7H2zM9 9v6M12 8v7M14 8v7"],
  ["차트 겹침", "M5 2h9.500v8H5M1.500 5.500h9v9h-9zM3 12l2-3 2 2 3-3"],
];

function BottomBar() {
  return (
    <div className="flex h-[18px] shrink-0 items-center bg-[#f0f0f0]">
      <button type="button" className={raised} aria-label="왼쪽으로"><svg viewBox="0 0 6 10" className="h-2 w-[5px]"><path d="M6 0v10L0 5z" /></svg></button>
      <div className="flex h-full min-w-0 flex-1 items-center bg-[#f6f6f6]">
        <div className="flex-[705]" />
        <div className="h-[17px] flex-[341] border border-b-[#666] border-l-white border-r-[#666] border-t-white bg-[#f0f0f0]" />
        <div className="flex-[476]" />
      </div>
      <div className="flex">
        <button type="button" className={raised} aria-label="재생"><svg viewBox="0 0 10 10" className="h-[10px] w-[10px]"><path d="M3 0l5 5-5 5z" /></svg></button>
        <button type="button" className={raised} aria-label="뒤로"><svg viewBox="0 0 10 10" className="h-[10px] w-[10px]"><path d="M5 1v8L0 5zM10 1v8L5 5z" /></svg></button>
        <button type="button" className={raised} aria-label="정지"><svg viewBox="0 0 10 10" className="h-[10px] w-[10px]"><path d="M2 1h6v8H2z" /></svg></button>
        <button type="button" className={raised} aria-label="앞으로"><svg viewBox="0 0 10 10" className="h-[10px] w-[10px]"><path d="M0 1l5 4-5 4zM5 1l5 4-5 4z" /></svg></button>
      </div>
      <div className="ml-1 w-[70px]">
        <input type="range" aria-label="속도" min={0} max={100} defaultValue={25} className="block h-[11px] w-full appearance-none bg-[linear-gradient(#999,#999)] bg-[length:100%_2px] bg-center bg-no-repeat [&::-webkit-slider-thumb]:h-[11px] [&::-webkit-slider-thumb]:w-1 [&::-webkit-slider-thumb]:appearance-none [&::-webkit-slider-thumb]:border [&::-webkit-slider-thumb]:border-[#666] [&::-webkit-slider-thumb]:bg-[#f0f0f0]" />
        <svg viewBox="0 0 70 4" className="block h-1 w-full"><path d="M2.500 0v4M9.500 0v4M15.500 0v4M22.500 0v4M28.500 0v4M35.500 0v4M41.500 0v4M48.500 0v4M54.500 0v4M61.500 0v4M67.500 0v4" stroke="#000" /></svg>
      </div>
      <div className="ml-2 flex items-center text-[#666]">
        {TOOLS.map(([n, d]) => (
          <button key={n} type="button" aria-label={n} className={"flex h-[17px] w-[17px] items-center justify-center " + (n === "십자선" ? "border border-b-white border-l-[#888] border-r-white border-t-[#888] bg-white" : "")}><Ico label={n}><path d={d} /></Ico></button>
        ))}
        <button type="button" aria-label="확대" className="w-[17px]"><Ico label="확대"><circle cx="7" cy="6.500" r="4.500" /><path d="M10 10l5 5" strokeWidth="2" /></Ico></button>
        <button type="button" aria-label="축소" className="w-[17px]"><Ico label="축소"><path d="M3 8h10" strokeWidth="2" /></Ico></button>
        <button type="button" aria-label="늘리기" className="w-[17px]"><Ico label="늘리기"><path d="M3 8h10M8 3v10" strokeWidth="2" /></Ico></button>
        <button type="button" className="w-[14px] text-[15px] font-bold leading-4">A</button>
      </div>
    </div>
  );
}

export default function App() {
  return (
    <div className="flex h-screen flex-col overflow-hidden border-b-[3px] border-l-[3px] border-r-[4px] border-t border-black bg-[#d0d0d0] text-[13px] leading-4 text-black [font-family:'Noto_Sans_CJK_KR',sans-serif]">
      <TitleBar />
      <div className="shrink-0 px-[3px] pb-[3px] pt-[5px]">
        <Toolbar />
        <QuoteRow />
      </div>
      <main className="mx-[3px] mb-[3px] flex min-h-0 flex-1 flex-col border-x border-t border-[#999]">
        <section className="relative flex min-h-0 flex-[796]">
          <div className="w-[42px] shrink-0 border-r border-[#999]"><LeftPriceAxis /></div>
          <div className="min-w-0 flex-1"><PricePlot /></div>
          <div className="w-[46px] shrink-0 border-l border-[#999]"><RightPriceAxis /></div>
          <div className="absolute left-[44px] top-[1px] flex items-center gap-[3px]">
            <span className="h-[6px] w-[6px] border border-[#666] bg-[#bbb]" />
            <span className="border border-[#bbb] bg-[#f0f0f0] px-[3px] leading-[13px] text-[#333]">라이콤 매물대 수(13)</span>
          </div>
        </section>
        <section className="flex min-h-0 flex-[164] border-t border-[#999]">
          <div className="w-[42px] shrink-0 border-r border-[#999]"><LeftVolumeAxis /></div>
          <div className="min-w-0 flex-1"><VolumePlot /></div>
          <div className="w-[46px] shrink-0 border-l border-[#999]"><RightVolumeAxis /></div>
        </section>
        <TimeAxis />
        <BottomBar />
      </main>
    </div>
  );
}
